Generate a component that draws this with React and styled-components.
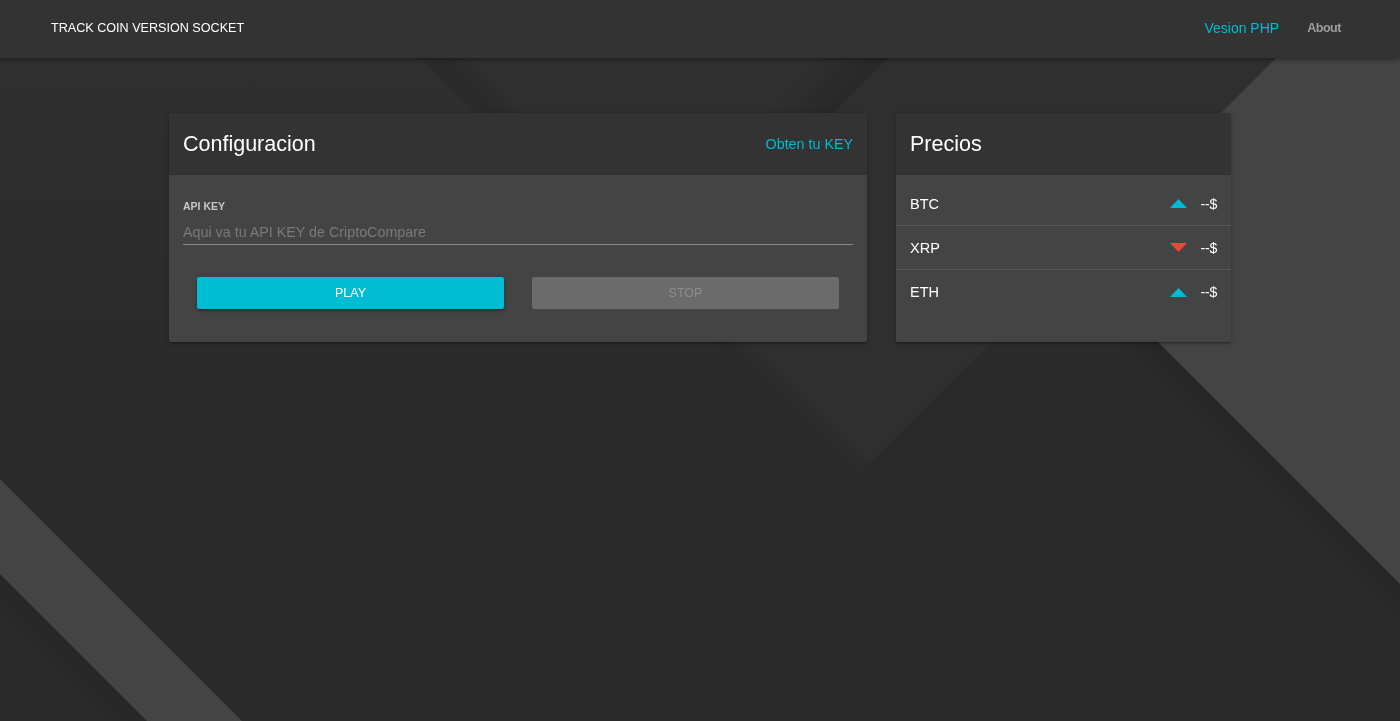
import styled, { createGlobalStyle } from "styled-components";

const GlobalStyle = createGlobalStyle`
  html, body {
    margin: 0;
    padding: 0;
    background: #2a2a2a;
    font-family: "Liberation Sans", Arial, Helvetica, sans-serif;
  }
  * { box-sizing: border-box; }
`;

const Page = styled.div`
  position: relative;
  min-height: 100vh;
  overflow: hidden;
`;

const Backdrop = styled.svg`
  position: fixed;
  top: 0;
  left: 0;
  width: 100%;
  height: 100%;
  z-index: 0;
`;

const Nav = styled.nav`
  position: relative;
  z-index: 2;
  height: 58px;
  background: #333333;
  display: flex;
  align-items: center;
  justify-content: space-between;
  padding: 0 59px 0 51px;
  box-shadow: 0 2px 4px rgba(0, 0, 0, 0.35);
`;

const Brand = styled.div`
  color: #fff;
  font-size: 12.6px;
  margin-top: -2px;
`;

const NavLinks = styled.div`
  display: flex;
  align-items: center;
  gap: 28px;
  margin-top: -2px;
`;

const NavLink = styled.a`
  text-decoration: none;
  cursor: pointer;
  color: ${(p) => (p.$active ? "#00bcd4" : "#9e9e9e")};
  font-size: ${(p) => (p.$active ? "14px" : "12.5px")};
  font-weight: ${(p) => (p.$active ? 400 : 700)};
  letter-spacing: ${(p) => (p.$active ? "0" : "-0.45px")};
`;

const Main = styled.main`
  position: relative;
  z-index: 1;
  display: flex;
  justify-content: center;
  gap: 29px;
  padding-top: 55px;
`;

const Card = styled.section`
  width: ${(p) => p.$width}px;
  height: 229px;
  background: #444444;
  border-radius: 2px;
  overflow: hidden;
  display: flex;
  flex-direction: column;
  box-shadow: 0 2px 2px 0 rgba(0, 0, 0, 0.14), 0 3px 1px -2px rgba(0, 0, 0, 0.12),
    0 1px 5px 0 rgba(0, 0, 0, 0.2);
`;

const CardHeader = styled.header`
  height: 62px;
  flex-shrink: 0;
  background: #333333;
  display: flex;
  align-items: center;
  justify-content: space-between;
  padding: 0 14px;
`;

const CardTitle = styled.h2`
  margin: 0;
  color: #fff;
  font-size: 21.5px;
  font-weight: 400;
`;

const HeaderLink = styled.a`
  color: #00bcd4;
  font-size: 14.3px;
  text-decoration: none;
  cursor: pointer;
`;

const ConfigBody = styled.div`
  padding: 25px 14px 0;
  display: flex;
  flex-direction: column;
`;

const Label = styled.label`
  display: block;
  height: 12px;
  line-height: 12px;
  font-size: 10.5px;
  font-weight: 700;
  color: #c8c8c8;
  margin-bottom: 8px;
`;

const KeyInput = styled.input`
  width: 100%;
  height: 25px;
  padding: 0 0 1px;
  background: transparent;
  border: none;
  border-bottom: 1px solid #8a8a8a;
  outline: none;
  color: #fff;
  font-family: inherit;
  font-size: 14.3px;
  &::placeholder {
    color: #7a7a7a;
  }
`;

const ButtonRow = styled.div`
  display: grid;
  grid-template-columns: 1fr 1fr;
  gap: 28px;
  padding: 0 28px;
  margin-top: 32px;
`;

const Button = styled.button`
  height: 32px;
  border: none;
  border-radius: 2px;
  font-family: inherit;
  font-size: 12.5px;
  text-transform: uppercase;
  cursor: ${(p) => (p.disabled ? "default" : "pointer")};
  background: ${(p) => (p.disabled ? "#6b6b6b" : "#00bcd4")};
  color: ${(p) => (p.disabled ? "#8d8d8d" : "#fff")};
  box-shadow: ${(p) =>
    p.disabled
      ? "none"
      : "0 2px 2px 0 rgba(0,0,0,0.14), 0 3px 1px -2px rgba(0,0,0,0.12), 0 1px 5px 0 rgba(0,0,0,0.2)"};
`;

const PriceList = styled.ul`
  list-style: none;
  margin: 0;
  padding: 7px 0 0;
`;

const PriceRow = styled.li`
  height: 44px;
  display: flex;
  align-items: center;
  justify-content: space-between;
  padding: 0 14px;
  border-bottom: 1px solid #585858;
  &:last-child {
    border-bottom: none;
  }
`;

const Coin = styled.span`
  color: #fff;
  font-size: 14.5px;
`;

const Quote = styled.span`
  display: flex;
  align-items: center;
  gap: 13px;
  color: #fff;
  font-size: 14px;
  letter-spacing: -0.2px;
`;

const Arrow = ({ up }) => (
  <svg width="17" height="9" viewBox="0 0 17 9">
    {up ? (
      <polygon points="0,9 8.5,0 17,9" fill="#00bcd4" />
    ) : (
      <polygon points="0,0 17,0 8.5,9" fill="#f44336" />
    )}
  </svg>
);

const prices = [
  { coin: "BTC", up: true },
  { coin: "XRP", up: false },
  { coin: "ETH", up: true },
];

const Background = () => (
  <Backdrop viewBox="0 0 1400 721" preserveAspectRatio="xMidYMid slice">
    <defs>
      <linearGradient id="base" x1="0" y1="0" x2="0" y2="1">
        <stop offset="0" stopColor="#303030" />
        <stop offset="0.55" stopColor="#2a2a2a" />
        <stop offset="1" stopColor="#2a2a2a" />
      </linearGradient>
      <linearGradient id="vShade" gradientUnits="userSpaceOnUse" x1="605" y1="242" x2="630" y2="217">
        <stop offset="0" stopColor="#000" stopOpacity="0.08" />
        <stop offset="0.35" stopColor="#000" stopOpacity="0.12" />
        <stop offset="1" stopColor="#000" stopOpacity="0" />
      </linearGradient>
      <linearGradient id="bandShade" gradientUnits="userSpaceOnUse" x1="438" y1="438" x2="473" y2="473">
        <stop offset="0" stopColor="#000" stopOpacity="0" />
        <stop offset="1" stopColor="#000" stopOpacity="0.16" />
      </linearGradient>
      <linearGradient id="rightShade" gradientUnits="userSpaceOnUse" x1="1250" y1="434" x2="1228" y2="456">
        <stop offset="0" stopColor="#000" stopOpacity="0.12" />
        <stop offset="1" stopColor="#000" stopOpacity="0" />
      </linearGradient>
      <linearGradient id="leftShade" gradientUnits="userSpaceOnUse" x1="73" y1="647" x2="52" y2="668">
        <stop offset="0" stopColor="#000" stopOpacity="0.1" />
        <stop offset="1" stopColor="#000" stopOpacity="0" />
      </linearGradient>
    </defs>
    <rect width="1400" height="721" fill="url(#base)" />
    <polygon points="363,0 1333,0 848,485" fill="#2f2f2f" />
    <polygon points="363,0 1333,0 848,485" fill="url(#vShade)" />
    <polygon points="876,0 946,0 696,250 626,250" fill="url(#bandShade)" />
    <polygon points="1075,259 1400,584 1400,721 1000,721 1000,259" fill="url(#rightShade)" />
    <polygon points="1334,0 1400,0 1400,584 1075,259" fill="#444444" />
    <polygon points="0,574 147,721 0,721" fill="url(#leftShade)" />
    <polygon points="0,479 242,721 147,721 0,574" fill="#444444" />
  </Backdrop>
);

export default function App() {
  return (
    <Page>
      <GlobalStyle />
      <Background />
      <Nav>
        <Brand>TRACK COIN VERSION SOCKET</Brand>
        <NavLinks>
          <NavLink $active>Vesion PHP</NavLink>
          <NavLink>About</NavLink>
        </NavLinks>
      </Nav>
      <Main>
        <Card $width={698}>
          <CardHeader>
            <CardTitle>Configuracion</CardTitle>
            <HeaderLink>Obten tu KEY</HeaderLink>
          </CardHeader>
          <ConfigBody>
            <Label htmlFor="apikey">API KEY</Label>
            <KeyInput id="apikey" placeholder="Aqui va tu API KEY de CriptoCompare" />
          </ConfigBody>
          <ButtonRow>
            <Button>Play</Button>
            <Button disabled>Stop</Button>
          </ButtonRow>
        </Card>
        <Card $width={335}>
          <CardHeader>
            <CardTitle>Precios</CardTitle>
          </CardHeader>
          <PriceList>
            {prices.map((p) => (
              <PriceRow key={p.coin}>
                <Coin>{p.coin}</Coin>
                <Quote>
                  <Arrow up={p.up} />
                  --$
                </Quote>
              </PriceRow>
            ))}
          </PriceList>
        </Card>
      </Main>
    </Page>
  );
}
